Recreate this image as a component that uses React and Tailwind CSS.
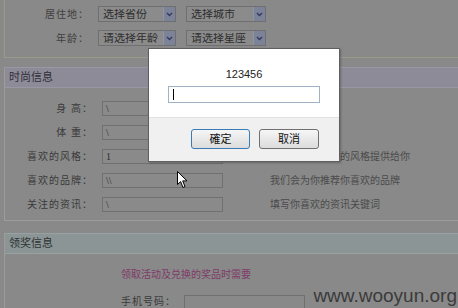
import React from "react";

const font = { fontFamily: '"Liberation Sans", "Noto Sans CJK SC", sans-serif' };

function Select({ text, w = "w-[78px]" }) {
    return (
        <div className={`${w} h-[16px] border border-[#6f6f6f] bg-[#8b8b8b] flex items-center justify-between pl-[4px]`}>
            <span className="text-[11px] leading-none text-[#2e2e2e] whitespace-nowrap overflow-hidden">{text}</span>
            <span className="w-[12px] h-[14px] bg-[#7c8398] border-l border-[#8f95a8] flex items-center justify-center">
                <svg width="7" height="5" viewBox="0 0 7 5"><path d="M1 1 L3.5 3.5 L6 1" stroke="#2f3a5c" strokeWidth="1.4" fill="none" /></svg>
            </span>
        </div>
    );
}

function Row({ label, value, hint }) {
    return (
        <div className="flex items-center h-[24px]">
            <div className="w-[88px] text-right text-[10px] text-[#3a3a3a] tracking-[1px]">{label}</div>
            <div className="ml-[9px] w-[121px] h-[15px] border border-[#707070] bg-[#8a8a8a] text-[10px] leading-[13px] pl-[3px] text-[#2a2a2a]" style={{ fontFamily: '"Liberation Serif", serif' }}>{value}</div>
            {hint && <div className="ml-[47px] text-[10px] text-[#4b4b4b] whitespace-nowrap">{hint}</div>}
        </div>
    );
}

export default function App() {
    return (
        <div className="relative w-[458px] h-[308px] overflow-hidden bg-[#898989]" style={font}>
            {/* top box */}
            <div className="ml-[4px] h-[58px] border-l border-b border-[#9b9a88] pt-[5px]">
                <div className="flex items-center h-[18px]">
                    <div className="w-[84px] text-right text-[10px] text-[#3f3f3f] tracking-[1px]">居住地：</div>
                    <div className="ml-[9px] flex gap-[10px]">
                        <Select text="选择省份" />
                        <Select text="选择城市" w="w-[80px]" />
                    </div>
                </div>
                <div className="flex items-center h-[18px] mt-[6px]">
                    <div className="w-[84px] text-right text-[10px] text-[#3f3f3f] tracking-[1px]">年龄：</div>
                    <div className="ml-[9px] flex gap-[10px]">
                        <Select text="请选择年龄" />
                        <Select text="请选择星座" w="w-[80px]" />
                    </div>
                </div>
            </div>

            {/* 时尚信息 */}
            <div className="ml-[4px] mt-[9px] h-[154px] border-l border-b border-[#9c9c9c]">
                <div className="h-[21px] bg-[#8e8b98] border-y border-[#9a97a5] flex items-center pl-[4px] text-[11px] text-[#2e2e36]">时尚信息</div>
                <div className="pt-[8px]">
                    <Row label="身 高：" value="\" />
                    <Row label="体 重：" value="\" />
                    <Row label="喜欢的风格：" value="1" hint="我们会将你喜欢的风格提供给你" />
                    <Row label="喜欢的品牌：" value="\\" hint="我们会为你推荐你喜欢的品牌" />
                    <Row label="关注的资讯：" value="\" hint="填写你喜欢的资讯关键词" />
                </div>
            </div>

            {/* 领奖信息 */}
            <div className="ml-[4px] mt-[12px] border-l border-[#9c9c9c]">
                <div className="h-[21px] bg-[#8b9595] border-y border-[#97a3a3] flex items-center pl-[4px] text-[11px] text-[#2e3434]">领奖信息</div>
                <div className="pl-[116px] pt-[13px] text-[10px] text-[#7e3a68]">领取活动及兑换的奖品时需要</div>
                <div className="flex items-center pl-[116px] mt-[12px]">
                    <div className="text-[10px] text-[#3a3a3a] tracking-[1px]">手机号码：</div>
                    <div className="ml-[8px] w-[121px] h-[14px] border border-[#707070]" />
                </div>
            </div>

            {/* watermark */}
            <div className="absolute right-[1px] top-[286px] text-[19px] leading-none text-[#3b3b3b] whitespace-nowrap" style={{ fontFamily: '"Liberation Sans", Arial, sans-serif' }}>www.wooyun.org</div>

            {/* prompt dialog */}
            <div className="absolute left-[148px] top-[48px] w-[192px] h-[114px] border border-[#5f5f5f] bg-white flex flex-col shadow-[1px_1px_2px_rgba(0,0,0,0.25)]">
                <div className="h-[68px] flex flex-col items-center">
                    <div className="mt-[20px] text-[11px] leading-none text-[#222]">123456</div>
                    <div className="mt-[6px] w-[152px] h-[17px] border border-[#9fb3c4] flex items-center pl-[4px]">
                        <div className="w-px h-[11px] bg-black" />
                    </div>
                </div>
                <div className="flex-1 bg-[#f0f0f0] border-t border-[#e2e2e2] flex justify-end items-start pt-[11px] pr-[20px] gap-[9px]">
                    <button className="w-[59px] h-[20px] rounded-[3px] border border-[#3a7ab5] bg-gradient-to-b from-[#f6f6f6] to-[#dcdcdc] text-[11px] leading-none text-[#111]">確定</button>
                    <button className="w-[60px] h-[20px] rounded-[3px] border border-[#707070] bg-gradient-to-b from-[#f6f6f6] to-[#dcdcdc] text-[11px] leading-none text-[#111]">取消</button>
                </div>
            </div>

            {/* mouse pointer */}
            <svg className="absolute left-[177px] top-[171px]" width="12" height="18" viewBox="0 0 12 18">
                <path d="M0.5 0.5 L0.5 13.5 L3.6 10.6 L6 16.5 L8 15.6 L5.7 9.9 L10 9.9 Z" fill="#ffffff" stroke="#000000" strokeWidth="1" strokeLinejoin="round" />
            </svg>
        </div>
    );
}
